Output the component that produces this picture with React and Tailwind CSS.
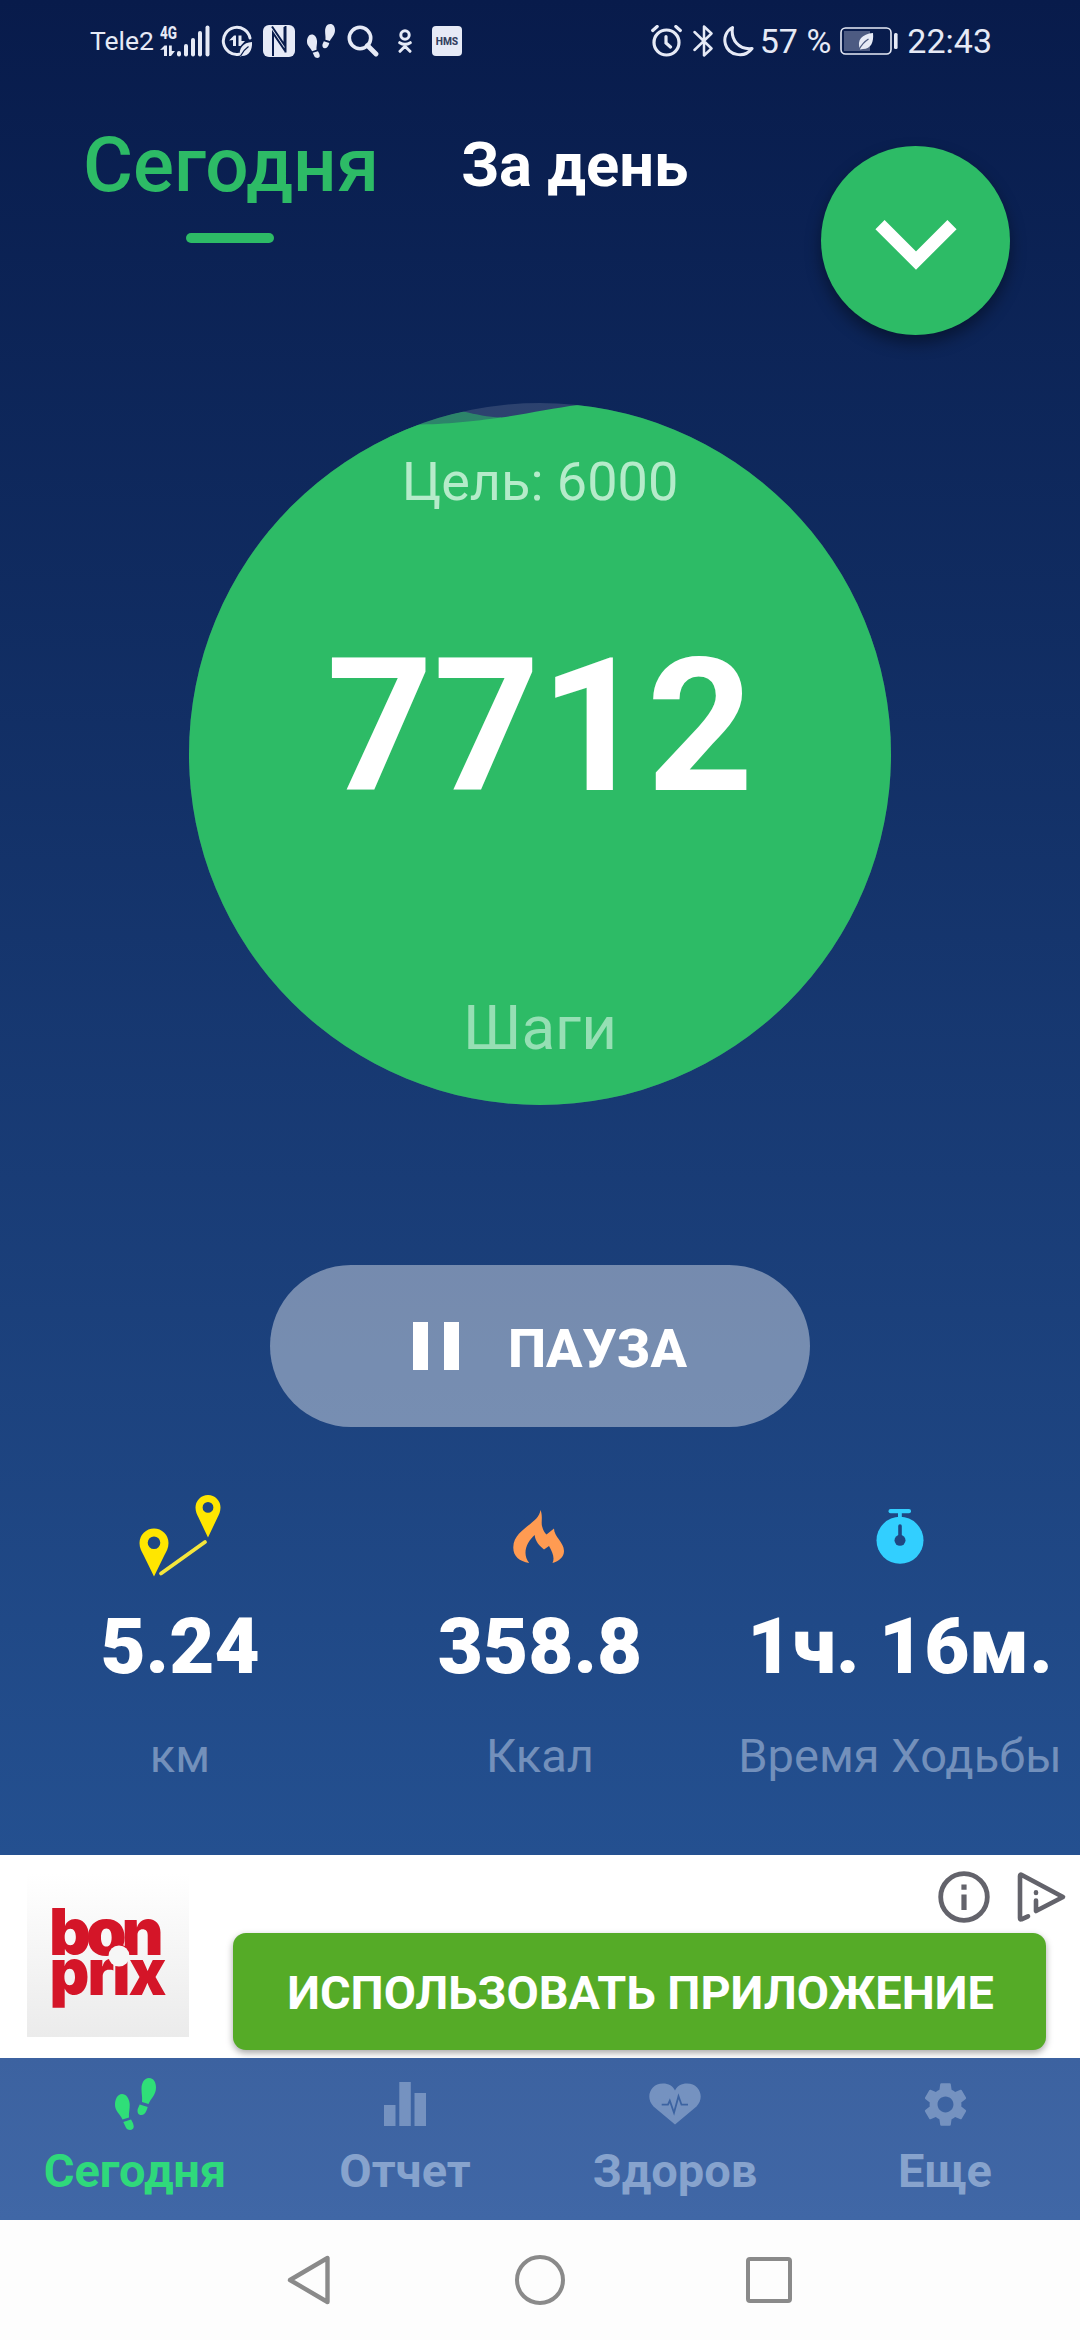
import { MdSettings } from 'react-icons/md';

const FootstepsIcon = ({ className }) => (
  <svg viewBox="0 0 41 52" fill="currentColor" preserveAspectRatio="none" className={className}>
    <path d="M7 16C2.500 16 0 21 0 27c0 6 5 9 7.500 14.500l6.500-2C13.500 35 15 31 14.700 26 14.200 20 11 16 7 16Z" />
    <path d="m8.300 44 7.700-2.500c2.500 4 3.500 7.500 2 9.200-2 2-5.500 1.500-7-1Z" />
    <path d="M34 0c-5 0-7.500 5-7.500 11 0 5 1 8 .5 13l6.500 2C35.500 21 41 17 41 9.500 41 4 38.500 0 34 0Z" />
    <path d="m24.700 26.500 8 2.500c-1.200 4-2.700 7.800-6 8-3.500.3-4.700-2.500-4-6Z" />
  </svg>
);

const SignalIcon = () => (
  <svg viewBox="0 0 50 32" className="ml-[6px] h-[32px] w-[50px] overflow-visible" fill="currentColor">
    <text x="0" y="14" fontFamily="Roboto, sans-serif" fontWeight="800" fontSize="18.500" textLength="17" lengthAdjust="spacingAndGlyphs">4G</text>
    <path d="M0 25 4.500 20.500H7V31H4v-6.500ZM9 20.500h2.800V26H15l-4 5H9Z" />
    <rect x="17" y="26" width="4" height="5.500" rx="2" />
    <rect x="24" y="19" width="4" height="12.500" rx="2" />
    <rect x="31" y="13" width="4" height="18.500" rx="2" />
    <rect x="38" y="6" width="4" height="25.500" rx="2" />
    <rect x="45.500" y="0.500" width="4" height="31" rx="2" />
  </svg>
);

const DataSaverIcon = () => (
  <svg viewBox="0 0 32 32" className="ml-[11px] size-[32px]" fill="none">
    <path d="M18 29.200A13.500 13.500 0 1 1 29 13" stroke="currentColor" strokeWidth="3" strokeLinecap="round" />
    <path d="m8 15.500 5-5h2V21h-3v-6ZM17.500 10.500h3V16H24l-4.500 5h-2Z" fill="currentColor" />
    <path d="M31 17c.5 8-3 14-10 14l-2 .5c-1.500-8 3-14 12-14.500Z" fill="currentColor" />
    <path d="M19.500 31c2-4 4.500-7 8-9.500" stroke="#081c4c" strokeWidth="1.300" />
  </svg>
);

const NfcIcon = () => (
  <svg viewBox="0 0 32 32" className="ml-[10px] size-[32px]">
    <rect width="32" height="32" rx="6" fill="currentColor" />
    <path d="M10 31V8L22.500 26.500M9 1.500 21.500 20V2M22.500 1v26.500" fill="none" stroke="#081c4c" strokeWidth="2" />
  </svg>
);

const SearchIcon = () => (
  <svg viewBox="0 0 32 32" className="ml-[12px] size-[32px]" fill="none" stroke="currentColor">
    <circle cx="13" cy="13" r="10.700" strokeWidth="3.600" />
    <path d="m20.500 20.500 8.500 8.500" strokeWidth="4.800" strokeLinecap="round" />
  </svg>
);

const OkIcon = () => (
  <svg viewBox="0 0 14 24" className="ml-[19px] h-[24px] w-[14px]" fill="none" stroke="currentColor" strokeWidth="3" strokeLinecap="round">
    <circle cx="7" cy="6" r="4.200" />
    <path d="M1.700 13.700C5 15.700 9 15.700 12.300 13.700M2 22.300l5-5 5 5" />
  </svg>
);

const HmsIcon = () => (
  <svg viewBox="0 0 30 30" className="ml-[20px] size-[30px]">
    <rect width="30" height="30" rx="4" fill="currentColor" />
    <text x="3.700" y="18.500" fontFamily="Roboto, sans-serif" fontWeight="800" fontSize="10" textLength="22.500" lengthAdjust="spacingAndGlyphs" fill="#33405f">HMS</text>
  </svg>
);

const AlarmIcon = () => (
  <svg viewBox="0 0 31 32" className="h-[32px] w-[31px]" fill="none" stroke="currentColor" strokeWidth="3.200" strokeLinecap="round">
    <circle cx="15.500" cy="17.500" r="12.500" />
    <path d="m1.700 5.500 4.500-4M29.300 5.500l-4.500-4M15 11.500V18l4.500 4" />
  </svg>
);

const BluetoothIcon = () => (
  <svg viewBox="0 0 20 32" className="ml-[11px] h-[32px] w-[20px]" fill="none" stroke="currentColor" strokeWidth="2.500" strokeLinejoin="round" strokeLinecap="round">
    <path d="m1.500 7 17 16.500-7.500 7V1.500l7.500 7L1.500 25" />
  </svg>
);

const MoonIcon = () => (
  <svg viewBox="0 0 31 32" className="ml-[10px] h-[32px] w-[31px]" fill="none" stroke="currentColor" strokeWidth="3" strokeLinejoin="round">
    <path d="M9.500 2.500C3 6 .5 13 2.500 19.500 5.500 30 21 34 29 23.500 16 25 7.500 15 9.500 2.500Z" />
  </svg>
);

const BatteryIcon = () => (
  <svg viewBox="0 0 58 28" className="ml-[9px] h-[28px] w-[58px]">
    <rect x="1" y="1" width="50" height="26" rx="4.500" fill="none" stroke="currentColor" strokeWidth="1.600" />
    <rect x="4" y="4" width="26" height="20" fill="#4d5b82" />
    <path d="M33 6c1 9-2 16-10 16l-3 .5C16.500 13 22 7 33 6Z" fill="currentColor" />
    <path d="M19 22.500c2.500-4.500 5.500-8 9.500-10.500" stroke="#4d5b82" strokeWidth="1.300" fill="none" />
    <rect x="54" y="6" width="3.600" height="16" rx="1.500" fill="currentColor" />
  </svg>
);

const StatusBar = () => (
  <div className="flex h-[82px] items-center pl-[90px] pr-[88px] text-[#e6eaf6]">
    <span className="text-[26.5px] leading-none">Tele2</span>
    <SignalIcon />
    <DataSaverIcon />
    <NfcIcon />
    <FootstepsIcon className="ml-[12px] h-[34px] w-[28px]" />
    <SearchIcon />
    <OkIcon />
    <HmsIcon />
    <div className="ml-auto flex items-center">
      <AlarmIcon />
      <BluetoothIcon />
      <MoonIcon />
      <span className="ml-[6px] text-[34px] leading-none">57 %</span>
      <BatteryIcon />
      <span className="ml-[9px] text-[34px] leading-none">22:43</span>
    </div>
  </div>
);

const Header = () => (
  <div className="flex h-[321px] items-start pl-[83px] pr-[70px]">
    <div className="mt-[33px] flex flex-col items-center">
      <span className="text-[76.5px] font-medium leading-[100px] text-[#2dbb66]">Сегодня</span>
      <div className="mr-[2px] mt-[18px] h-[10px] w-[88px] rounded-full bg-[#2dbb66]" />
    </div>
    <span className="ml-[82px] mt-[33px] text-[61.5px] font-bold leading-[100px] text-white">За день</span>
    <button className="ml-auto mt-[64px] flex size-[189px] items-center justify-center rounded-full bg-[#2dbb66] shadow-[0_8px_16px_rgba(0,0,0,0.4)]">
      <svg viewBox="0 0 82 50" className="mt-[9px] h-[50px] w-[82px]" fill="none" stroke="white" strokeWidth="13">
        <path d="M5 4.700 41 40.500 77 4.700" />
      </svg>
    </button>
  </div>
);

const StepsDial = () => (
  <div className="relative flex size-[702px] flex-col items-center self-center">
    <svg viewBox="0 0 702 702" className="absolute inset-0 size-full">
      <clipPath id="dial">
        <circle cx="351" cy="351" r="351" />
      </clipPath>
      <g clipPath="url(#dial)">
        <rect width="702" height="702" fill="white" fillOpacity="0.13" />
        <path d="M200 24 274 8.500c14 3 24 5.500 38 6V50H200Z" fill="#2dbb66" fillOpacity="0.55" />
        <path d="M0 21.500h232c30-.5 62-4.500 80-7 28-4 53-9.500 77-12.500L420 0h282v702H0Z" fill="#2dbb66" />
      </g>
    </svg>
    <span className="relative mt-[49px] text-[54px] leading-[60px] text-[#b5ebca]">Цель: 6000</span>
    <span className="relative mt-[114px] text-[186px] font-bold leading-[200px] text-white">7712</span>
    <span className="relative mt-[162px] text-[62px] leading-[80px] text-[#96dfb4]">Шаги</span>
  </div>
);

const PauseButton = () => (
  <button className="mt-[160px] flex h-[162px] w-[540px] items-center self-center rounded-[81px] bg-white/40 pl-[143px]">
    <div className="flex gap-[16px]">
      <div className="h-[48px] w-[15px] bg-white" />
      <div className="h-[48px] w-[15px] bg-white" />
    </div>
    <span className="ml-[49px] mt-[6px] text-[54px] font-extrabold leading-none text-white">ПАУЗА</span>
  </button>
);

const RouteIcon = () => (
  <svg viewBox="0 0 82 82" className="size-[82px]">
    <path
      d="M15 33.500A14.500 14.500 0 0 0 .5 48c0 5 2 8 4 12L15 81.500 25.500 60c2-4 4-7 4-12A14.500 14.500 0 0 0 15 33.500Zm0 8a6.200 6.200 0 1 1 0 12.600 6.200 6.200 0 0 1 0-12.600Z"
      fill="#ffe600"
      fillRule="evenodd"
    />
    <path
      d="M69 0a12.500 12.500 0 0 0-12.500 12.500c0 4 1.500 7 3 10L69 42.500l9.500-20c1.500-3 3-6 3-10A12.500 12.500 0 0 0 69 0Zm0 7a5.400 5.400 0 1 1 0 10.800A5.400 5.400 0 0 1 69 7Z"
      fill="#ffe600"
      fillRule="evenodd"
    />
    <path d="M22 78.500 66 47" stroke="#f5e63c" strokeWidth="3.800" strokeLinecap="round" />
  </svg>
);

const FlameIcon = () => (
  <svg viewBox="0 0 51 53" className="mr-[3px] h-[53px] w-[51px]" fill="#ff9b52">
    <path d="M27.500 0C30 6 28 12 29 16c.8 3.500 2.500 7 4.500 8.500l7.500-6C41 27 51 32 51 41c0 6-5 10-11.500 12 2.500-5 0-11-3.500-17l-5 3.500C26.500 36 22 31 21.700 25 14 32 8.500 43 16.200 53 6 51 0 46 .3 37 .5 19 26 14 27.500 0Z" />
  </svg>
);

const TimerIcon = () => (
  <svg viewBox="0 0 48 55" className="h-[55px] w-[48px]">
    <rect x="12.500" width="22.500" height="4.300" rx="2" fill="#32cfff" />
    <rect x="22" y="3" width="3.800" height="6" fill="#32cfff" />
    <circle cx="24" cy="31.300" r="23.500" fill="#32cfff" />
    <circle cx="24" cy="31.300" r="5.500" fill="#1f4682" />
    <path d="M24 17v12" stroke="#1f4682" strokeWidth="3.600" strokeLinecap="round" />
  </svg>
);

const stats = [
  { icon: <RouteIcon />, value: '5.24', label: 'км' },
  { icon: <FlameIcon />, value: '358.8', label: 'Ккал' },
  { icon: <TimerIcon />, value: '1ч. 16м.', label: 'Время Ходьбы' },
];

const Stats = () => (
  <div className="mt-[68px] grid grid-cols-3">
    {stats.map((s) => (
      <div key={s.label} className="flex flex-col items-center whitespace-nowrap">
        <div className="flex h-[82px] items-center">{s.icon}</div>
        <span className="mt-[25px] text-[78px] font-black leading-[90px] text-white">{s.value}</span>
        <span className="mt-[34px] text-[47px] leading-[60px] text-[#7390bb]">{s.label}</span>
      </div>
    ))}
  </div>
);

const AdBanner = () => (
  <div className="flex h-[203px] overflow-hidden bg-white">
    <div className="ml-[27px] mt-[19px] h-[163px] w-[162px] bg-linear-to-b from-white to-[#ebebeb]">
      <svg viewBox="0 0 162 163" className="size-full" fontFamily="Inter, sans-serif" fontWeight="900" fontSize="65" fill="#d41528">
        <text x="22" y="80.500" letterSpacing="-5">bon</text>
        <text x="22.500" y="121" textLength="115" lengthAdjust="spacingAndGlyphs" letterSpacing="-2">prix</text>
        <circle cx="92" cy="82" r="10.500" fill="#f6f6f6" />
      </svg>
    </div>
    <div className="ml-[44px] flex flex-1 flex-col">
      <div className="flex h-[78px] items-start justify-end gap-[26px] pr-[13px] pt-[15px]">
        <svg viewBox="0 0 52 52" className="mt-px size-[52px]">
          <circle cx="26" cy="26" r="23.300" fill="none" stroke="#63636b" strokeWidth="4.800" />
          <path d="M23.400 13.500h5.200v5.200h-5.200ZM23.400 23.500h5.200v15.500h-5.200Z" fill="#63636b" />
        </svg>
        <svg viewBox="0 0 51 53" className="h-[53px] w-[51px]" fill="none" stroke="#63636b" strokeWidth="4.600" strokeLinecap="round" strokeLinejoin="round">
          <path d="m12 46.300-6.600 3Q4 50 4 48V6q0-2 1.800-1L47 27 20 41V30.500M20 22.400v.6" />
        </svg>
      </div>
      <button className="h-[117px] w-[813px] rounded-[13px] bg-[#55ab27] pl-[2px] pt-[3px] text-[46.8px] font-bold leading-none text-white shadow-[0_3px_7px_rgba(0,0,0,0.35)]">
        ИСПОЛЬЗОВАТЬ ПРИЛОЖЕНИЕ
      </button>
    </div>
  </div>
);

const BarsIcon = () => (
  <svg viewBox="0 0 42 44" className="h-[44px] w-[42px]" fill="currentColor">
    <path d="M0 23h11.500v21H0ZM15.300 0h11.500v44H15.300ZM30.500 11H42v33H30.500Z" />
  </svg>
);

const HeartIcon = () => (
  <svg viewBox="0 0 52 42" className="h-[42px] w-[52px]">
    <path d="M26 41.500 4.500 23.500C-4 15 1 .5 14 .5c5.500 0 10 2.500 12 7 2-4.500 6.500-7 12-7 13 0 18 14.500 9.500 23Z" fill="currentColor" />
    <path d="M12.700 21.700h6.300l1.800-4 4.200 12 4.500-16.500 3 8.500H39" fill="none" stroke="#3c63a1" strokeWidth="1.800" />
  </svg>
);

const tabs = [
  { label: 'Сегодня', icon: <FootstepsIcon className="h-[52px] w-[41px]" />, active: true },
  { label: 'Отчет', icon: <BarsIcon /> },
  { label: 'Здоров', icon: <HeartIcon /> },
  { label: 'Еще', icon: <MdSettings className="size-[53px]" /> },
];

const TabBar = () => (
  <div className="grid h-[162px] grid-cols-4 bg-linear-to-b from-[#3c62a0] to-[#4067a6] pt-[20px]">
    {tabs.map((tab) => (
      <div key={tab.label} className="flex flex-col items-center">
        <div className={`flex h-[52px] items-center justify-center ${tab.active ? 'text-[#2fdf78]' : 'text-[#7592c0]'}`}>
          {tab.icon}
        </div>
        <span className={`mt-[16px] text-[47px] font-bold leading-[50px] ${tab.active ? 'text-[#2fd97b]' : 'text-[#87a3cd]'}`}>
          {tab.label}
        </span>
      </div>
    ))}
  </div>
);

const SystemNav = () => (
  <div className="flex h-[120px] items-center bg-[#fdfdfd] pl-[286px]">
    <svg viewBox="0 0 45 52" className="h-[52px] w-[45px]" fill="none" stroke="#8a8a8a" strokeWidth="4.400" strokeLinejoin="round">
      <path d="M41.500 4v44L4 26Z" />
    </svg>
    <div className="ml-[184px] size-[50px] rounded-full border-[4.5px] border-[#8a8a8a]" />
    <div className="ml-[181px] size-[46px] rounded-[4px] border-[4.5px] border-[#8a8a8a]" />
  </div>
);

export default function App() {
  return (
    <div className="flex h-[2340px] w-[1080px] flex-col overflow-hidden font-[Roboto,sans-serif]">
      <div className="flex h-[1855px] flex-col bg-linear-to-b from-[#081b4b] to-[#245090]">
        <StatusBar />
        <Header />
        <StepsDial />
        <PauseButton />
        <Stats />
      </div>
      <AdBanner />
      <TabBar />
      <SystemNav />
    </div>
  );
}
